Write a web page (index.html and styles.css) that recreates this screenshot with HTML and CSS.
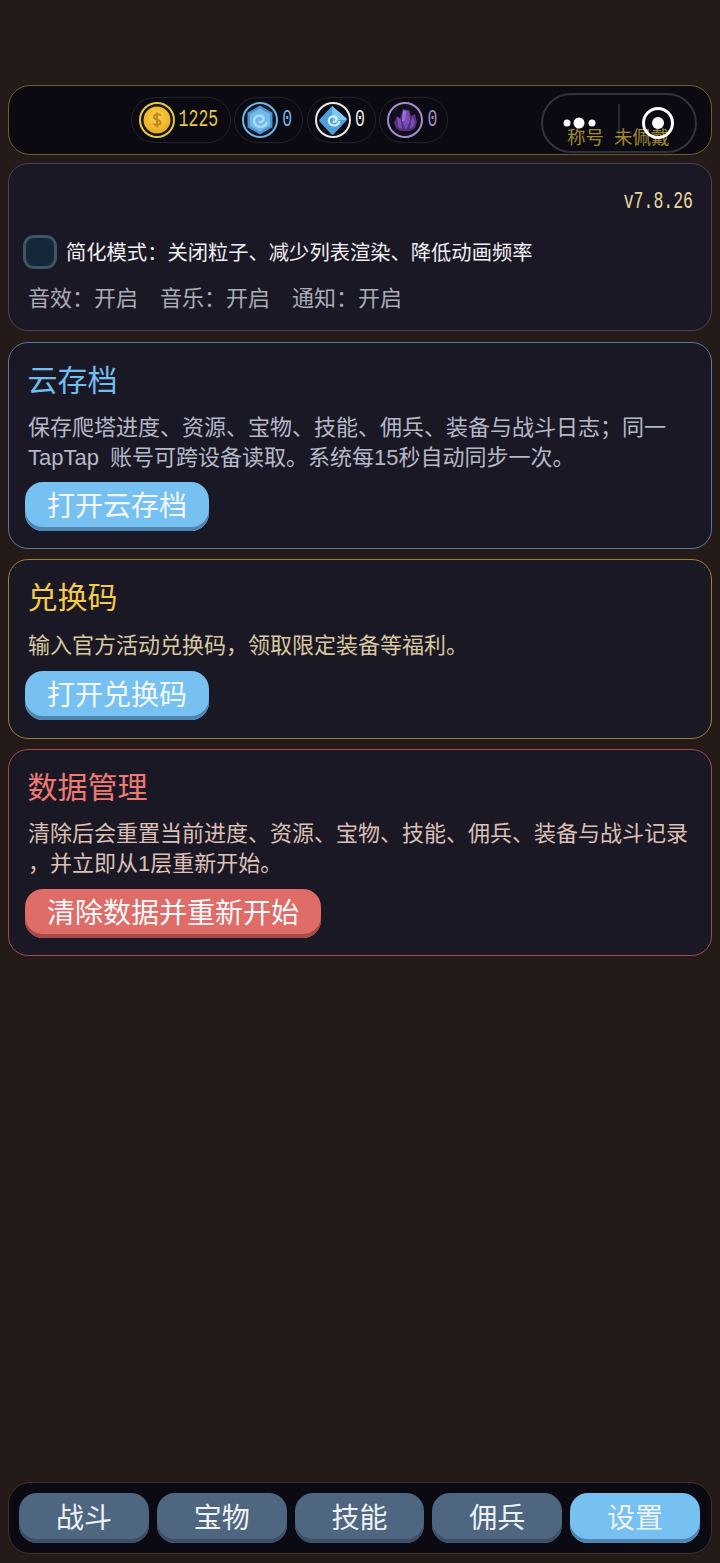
FILE: index.html
```html
<!DOCTYPE html>
<html lang="zh-CN">
<head>
    <meta charset="UTF-8">
    <meta name="viewport" content="width=device-width, initial-scale=1.0">
    <title>设置</title>
    <link rel="stylesheet" href="styles.css">
</head>
<body>
    <header class="topbar">
        <div class="resources">
            <div class="chip gold">
                <svg class="res-icon" viewBox="0 0 36 36">
                    <defs>
                        <radialGradient id="coin" cx="50%" cy="40%" r="60%"><stop offset="0" stop-color="#fbd54a"/><stop offset="1" stop-color="#e8a920"/></radialGradient>
                    </defs>
                    <circle cx="18" cy="18" r="17" fill="#17130c" stroke="#e2c93f" stroke-width="2"/>
                    <circle cx="18" cy="18" r="13.500" fill="url(#coin)"/>
                    <path d="M22 13.500c-1-1.300-6.800-1.800-7 1.500-.2 3.300 6.500 2.200 6.500 5.500 0 3.200-5.800 2.700-7 1.200M18 10.500v15" fill="none" stroke="#bd8a20" stroke-width="2"/>
                </svg>
                <span class="tall-num">1225</span>
            </div>
            <div class="chip blue">
                <svg class="res-icon" viewBox="0 0 36 36">
                    <circle cx="18" cy="18" r="17" fill="#0e1420" stroke="#6fb4e6" stroke-width="2"/>
                    <path d="M18 3.500l12.500 7.200v14.600L18 32.500 5.500 25.300V10.700z" fill="#4f95cf"/>
                    <path d="M18 6.500l10 5.800v11.400l-10 5.800-10-5.800V12.300z" fill="#74b8e8"/>
                    <path d="M25 20c-1 4.500-6.500 6-10 4-3.500-2-4-7-.8-9.500 3-2.200 7.500-.8 7.500 2.500 0 2.500-3 3.800-5 2.500" fill="none" stroke="#a6dcf8" stroke-width="2.500"/>
                </svg>
                <span class="tall-num">0</span>
            </div>
            <div class="chip white">
                <svg class="res-icon" viewBox="0 0 36 36">
                    <circle cx="18" cy="18" r="17" fill="#0c0c14" stroke="#ece8e0" stroke-width="2"/>
                    <path d="M17 4l14 12c1 1 1 2 0 3L19 32c-1 1-2 1-3 0L5 20c-1-1-1-2 0-3z" fill="#4f9edc"/>
                    <path d="M17 4l14 12c.6.600.8 1.200.6 2H18z" fill="#80c8f2"/>
                    <path d="M24.500 19c-.5 3.800-5 5.500-8.300 3.800-3-1.600-3.200-6-.5-7.800 2.600-1.600 6-.2 6 2.400 0 2-2.500 3-4 2" fill="none" stroke="#d4effc" stroke-width="2.200"/>
                </svg>
                <span class="tall-num">0</span>
            </div>
            <div class="chip purple">
                <svg class="res-icon" viewBox="0 0 36 36">
                    <circle cx="18" cy="18" r="17" fill="#120e1c" stroke="#a58cc8" stroke-width="2"/>
                    <path d="M7 21l3-7 3 2 3-9 6 1 2 6 4-2 2 8-2 6-5 3H13l-4-3z" fill="#52307e"/>
                    <path d="M16 8l6 1 1 10-4 9-4-9zM10 15l4 3 1 9-4-2zM26 14l2 7-2 4-3 2 1-8z" fill="#7a4cb4"/>
                    <path d="M16 8l3 1-1 10-3 0z" fill="#9a70d4"/>
                </svg>
                <span class="tall-num">0</span>
            </div>
        </div>
        <div class="player-title"><span>称号</span><span>未佩戴</span></div>
        <div class="capsule">
            <svg class="capsule-icons" viewBox="0 0 156 60">
                <circle cx="26" cy="30" r="3.500" fill="#fff"/>
                <circle cx="38" cy="30" r="5.500" fill="#fff"/>
                <circle cx="51" cy="30" r="3.500" fill="#fff"/>
                <path d="M78 11v36" stroke="#fff" stroke-opacity=".25"/>
                <circle cx="117" cy="30" r="14.500" fill="none" stroke="#fff" stroke-width="3"/>
                <circle cx="117" cy="30" r="6" fill="#fff"/>
            </svg>
        </div>
    </header>

    <section class="card card-plain">
        <div class="version"><span class="tall-num">v7.8.26</span></div>
        <div class="simple-row">
            <span class="checkbox"></span>
            <span class="simple-text">简化模式：关闭粒子、减少列表渲染、降低动画频率</span>
        </div>
        <div class="sound-row">
            <span>音效：开启</span>
            <span>音乐：开启</span>
            <span>通知：开启</span>
        </div>
    </section>

    <section class="card card-blue">
        <h2 class="card-title">云存档</h2>
        <p class="card-desc">保存爬塔进度、资源、宝物、技能、佣兵、装备与战斗日志；同一<br>TapTap 账号可跨设备读取。系统每15秒自动同步一次。</p>
        <button class="btn">打开云存档</button>
    </section>

    <section class="card card-yellow">
        <h2 class="card-title">兑换码</h2>
        <p class="card-desc">输入官方活动兑换码，领取限定装备等福利。</p>
        <button class="btn">打开兑换码</button>
    </section>

    <section class="card card-red">
        <h2 class="card-title">数据管理</h2>
        <p class="card-desc">清除后会重置当前进度、资源、宝物、技能、佣兵、装备与战斗记录<br>，并立即从1层重新开始。</p>
        <button class="btn btn-red">清除数据并重新开始</button>
    </section>

    <nav class="tabbar">
        <button class="tab">战斗</button>
        <button class="tab">宝物</button>
        <button class="tab">技能</button>
        <button class="tab">佣兵</button>
        <button class="tab active">设置</button>
    </nav>
</body>
</html>
```
FILE: styles.css
```css
* {
    box-sizing: border-box;
}

body {
    margin: 0;
    height: 1563px;
    padding: 85px 8px 9px;
    display: flex;
    flex-direction: column;
    background-color: #241a18;
    font-family: "Liberation Mono", "Noto Sans CJK SC", monospace;
    overflow: hidden;
}

/* narrow tall digits, the game's pixel font */
.tall-num {
    display: inline-block;
    font-size: 16.500px;
    line-height: 20px;
    transform: scaleY(1.5);
}

/* top bar */
.topbar {
    position: relative;
    height: 70px;
    display: flex;
    background-color: #0b0a12;
    border: 1px solid #6d5c32;
    border-radius: 22px;
}

.resources {
    width: 561px;
    display: flex;
    justify-content: center;
    align-items: center;
    gap: 3.700px;
}

.chip {
    height: 46px;
    padding: 0 10px 0 7px;
    display: flex;
    align-items: center;
    gap: 4px;
    border: 1px solid #23222c;
    border-radius: 23px;
}

.res-icon {
    flex: none;
    width: 36px;
    height: 36px;
}

.gold {
    width: 100px;
    color: #e2c93f;
}

.blue {
    color: #6fb4e6;
}

.white {
    color: #ece8e0;
}

.purple {
    color: #a58cc8;
}

.player-title {
    position: absolute;
    left: 558px;
    top: 38px;
    display: flex;
    gap: 10px;
    font-family: "Noto Sans CJK SC", sans-serif;
    font-size: 18.500px;
    line-height: 24px;
    color: #a08a2c;
}

.capsule {
    position: absolute;
    left: 532px;
    top: 7px;
    width: 156px;
    height: 60px;
    border: 2px solid #33323a;
    border-radius: 30px;
}

.capsule-icons {
    position: absolute;
    left: -2px;
    top: -2px;
    width: 156px;
    height: 60px;
}

/* cards */
.card {
    margin-top: 10px;
    padding: 15px 16px 17px;
    background-color: #1b1826;
    border: 1px solid #444;
    border-radius: 20px;
}

.card-plain {
    margin-top: 8px;
    padding-top: 25px;
    padding-bottom: 19px;
    border-color: #4a4358;
}

.version {
    height: 26px;
    padding-right: 2px;
    text-align: right;
    line-height: 26px;
    color: #e8d8a0;
}

.simple-row {
    margin-top: 20px;
    margin-left: -2px;
    display: flex;
    align-items: center;
    gap: 9px;
}

.checkbox {
    width: 34px;
    height: 34px;
    background-color: #15283a;
    border: 3px solid #3f5566;
    border-radius: 11px;
}

.simple-text {
    padding-bottom: 2px;
    font-family: "Noto Sans CJK SC", sans-serif;
    font-size: 20.300px;
    line-height: 30px;
    color: #f0f0f2;
}

.sound-row {
    margin-top: 12px;
    margin-left: 3px;
    display: flex;
    gap: 22px;
    font-family: "Noto Sans CJK SC", sans-serif;
    font-size: 22px;
    line-height: 30px;
    color: #a9abb6;
}

.card-title {
    margin: 0 0 15px 2.500px;
    font-family: "Noto Sans CJK SC", sans-serif;
    font-size: 30px;
    font-weight: normal;
    line-height: 40px;
}

.card-desc {
    margin: 0 0 9px 3px;
    font-family: "Liberation Sans", "Noto Sans CJK SC", sans-serif;
    font-size: 22px;
    line-height: 30px;
    word-spacing: 5px;
}

.card-blue {
    margin-top: 11px;
    border-color: #4f7f9f;
}

.card-blue .card-title {
    color: #72bdf0;
}

.card-blue .card-desc {
    color: #b5b9c6;
}

.card-yellow {
    padding-bottom: 18px;
    border-color: #9a8030;
}

.card-yellow .card-title {
    margin-bottom: 16px;
    color: #f5cb4a;
}

.card-yellow .card-desc {
    margin-bottom: 10px;
    color: #d8c8a0;
}

.card-red {
    border-color: #a04c4c;
}

.card-red .card-title {
    margin-bottom: 14px;
    color: #ef7a72;
}

.card-red .card-desc {
    margin-bottom: 10px;
    color: #dcc0b4;
}

.btn {
    display: block;
    height: 49px;
    padding: 0 22px 5px;
    background-color: #76c0f2;
    border: none;
    border-radius: 18px;
    box-shadow: inset 0 -4px 0 #4f86b0;
    font-family: "Noto Sans CJK SC", sans-serif;
    font-size: 28px;
    color: #f2f8fc;
}

.btn-red {
    background-color: #df6c66;
    box-shadow: inset 0 -4px 0 #a34c48;
}

/* bottom tabs */
.tabbar {
    margin-top: auto;
    height: 72px;
    padding: 10px 11px 10px 10px;
    display: flex;
    gap: 8px;
    background-color: #0b0a12;
    border: 1px solid #3e3230;
    border-radius: 22px;
}

.tab {
    flex: 1;
    padding: 0 0 5px;
    background-color: #4e6680;
    border: none;
    border-radius: 18px;
    box-shadow: inset 0 -4px 0 #3c4f66;
    font-family: "Noto Sans CJK SC", sans-serif;
    font-size: 28px;
    color: #eef2f6;
}

.tab.active {
    background-color: #76c0f2;
    box-shadow: inset 0 -4px 0 #4f86b0;
}
```
